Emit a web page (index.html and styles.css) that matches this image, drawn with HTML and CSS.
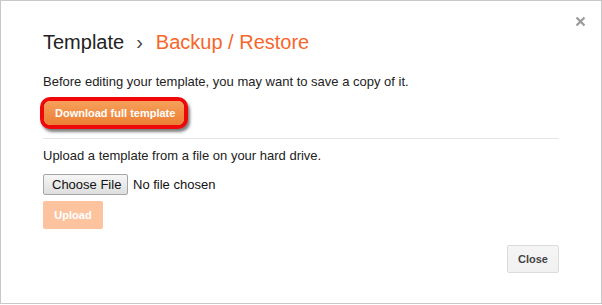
FILE: index.html
```html
<!DOCTYPE html>
<html>
<head>
<meta charset="utf-8">
<link rel="stylesheet" href="styles.css">
</head>
<body>
<div class="dialog">
  <button class="close-x" aria-label="Close">
    <svg width="11" height="11" viewBox="0 0 11 11"><path d="M1.5 1.5 L9.5 9.5 M9.5 1.5 L1.5 9.5" stroke="#9a9a9a" stroke-width="2.2" fill="none"/></svg>
  </button>
  <div class="content">
    <h1 class="title"><span class="crumb">Template</span><span class="sep">›</span><span class="current">Backup / Restore</span></h1>
    <p class="desc">Before editing your template, you may want to save a copy of it.</p>
    <div class="download-row"><button class="btn-orange">Download full template</button></div>
    <div class="divider"></div>
    <p class="desc upload-desc">Upload a template from a file on your hard drive.</p>
    <div class="file-row"><span class="choose">Choose File</span><span class="nofile">No file chosen</span></div>
    <div class="upload-row"><button class="btn-upload">Upload</button></div>
    <div class="footer"><button class="btn-close">Close</button></div>
  </div>
</div>
</body>
</html>
```
FILE: styles.css
```css
html, body { margin: 0; padding: 0; background: #fff; }
body { font-family: "Liberation Sans", Arial, sans-serif; color: #222; }
.dialog {
  position: relative;
  width: 600px;
  height: 302px;
  border: 1px solid #c8c8c8;
  background: #fff;
}
.close-x {
  position: absolute;
  left: 574px;
  top: 15px;
  width: 11px;
  height: 11px;
  padding: 0;
  border: 0;
  background: none;
  display: block;
}
.close-x svg { display: block; }
.content { padding: 29px 42px 0 42px; }
.title {
  margin: 0;
  font-size: 20px;
  line-height: 24px;
  font-weight: normal;
  color: #222;
  white-space: nowrap;
}
.sep { margin: 0 13px 0 12px; color: #444; }
.current { color: #f7662a; }
.desc { margin: 20px 0 0 0; font-size: 13px; line-height: 16px; color: #222; }
.download-row { margin-top: 11px; display: flex; }
.btn-orange {
  margin-left: 1px;
  height: 24px;
  padding: 0 9px 0 11px;
  border: 0;
  border-radius: 6px;
  background: linear-gradient(#f6a05a, #ec7e34);
  color: #fff;
  font-family: "Liberation Sans", Arial, sans-serif;
  font-weight: bold;
  font-size: 11px;
  box-shadow: 0 0 0 4px #f00808, 2px 3px 3px 4px rgba(0,0,0,0.5);
}
.divider { margin-top: 13px; height: 1px; background: #e5e5e5; }
.upload-desc { margin-top: 9px; }
.file-row { margin-top: 10px; display: flex; align-items: center; height: 21px; font-size: 13px; }
.choose {
  box-sizing: border-box;
  height: 21px;
  width: 85px;
  padding-left: 8px;
  line-height: 19px;
  border: 1px solid #a6a6a6;
  border-radius: 2px;
  background: linear-gradient(#f6f6f6, #dedede);
  color: #111;
}
.nofile { margin-left: 5px; color: #111; }
.upload-row { margin-top: 6px; display: flex; }
.btn-upload {
  width: 60px;
  height: 28px;
  padding: 0;
  border: 0;
  border-radius: 2px;
  background: #fdc39f;
  color: #fff;
  font-family: "Liberation Sans", Arial, sans-serif;
  font-weight: bold;
  font-size: 11px;
}
.footer { margin-top: 16px; display: flex; justify-content: flex-end; }
.btn-close {
  width: 52px;
  height: 28px;
  padding: 0;
  border: 1px solid #dcdcdc;
  border-radius: 2px;
  background: linear-gradient(#f5f5f5, #f1f1f1);
  color: #444;
  font-family: "Liberation Sans", Arial, sans-serif;
  font-weight: bold;
  font-size: 11px;
}
```
